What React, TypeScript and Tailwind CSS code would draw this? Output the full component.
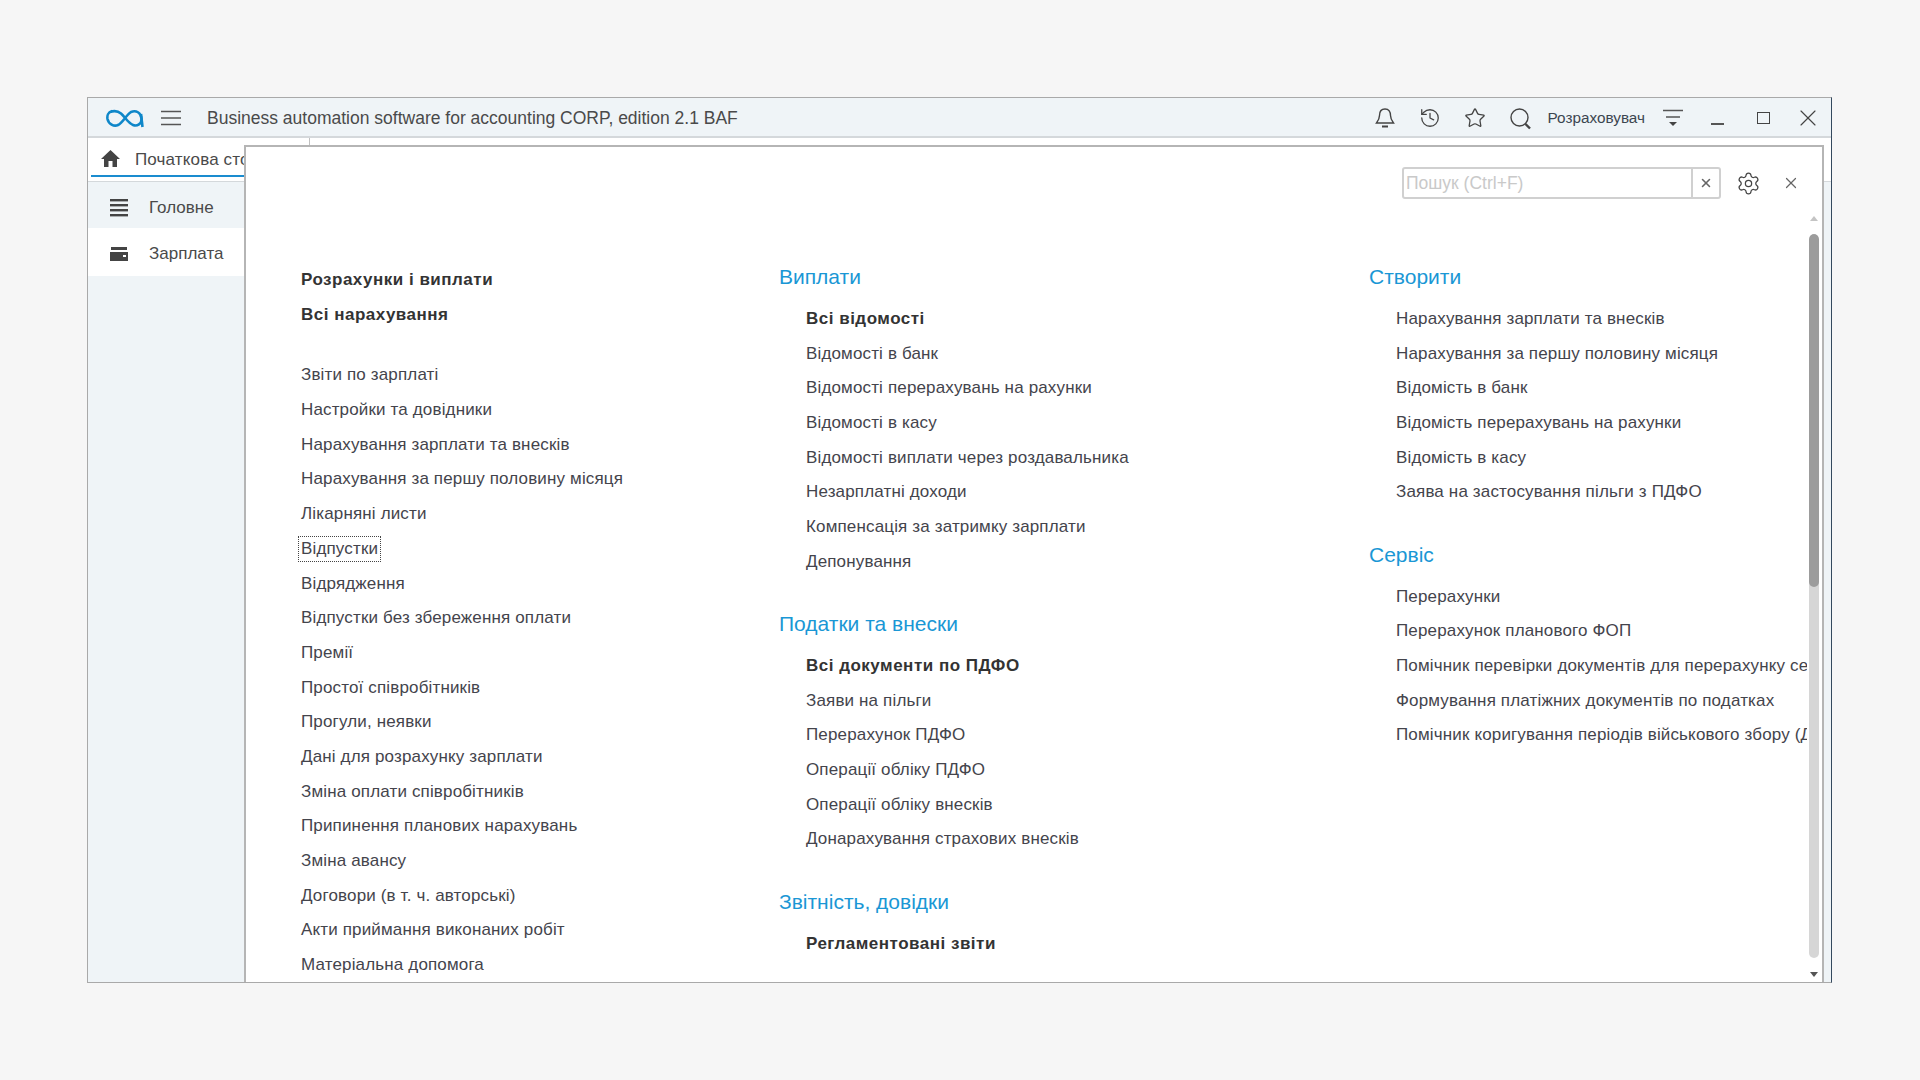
import { History, Star, Settings, X } from "lucide-react";

type Item = { label: string; bold?: boolean };

const leftTop = ["Розрахунки і виплати", "Всі нарахування"];
const leftItems = [
  "Звіти по зарплаті",
  "Настройки та довідники",
  "Нарахування зарплати та внесків",
  "Нарахування за першу половину місяця",
  "Лікарняні листи",
  "Відпустки",
  "Відрядження",
  "Відпустки без збереження оплати",
  "Премії",
  "Простої співробітників",
  "Прогули, неявки",
  "Дані для розрахунку зарплати",
  "Зміна оплати співробітників",
  "Припинення планових нарахувань",
  "Зміна авансу",
  "Договори (в т. ч. авторські)",
  "Акти приймання виконаних робіт",
  "Матеріальна допомога",
];

const groupsMiddle: { title: string; items: Item[] }[] = [
  {
    title: "Виплати",
    items: [
      { label: "Всі відомості", bold: true },
      { label: "Відомості в банк" },
      { label: "Відомості перерахувань на рахунки" },
      { label: "Відомості в касу" },
      { label: "Відомості виплати через роздавальника" },
      { label: "Незарплатні доходи" },
      { label: "Компенсація за затримку зарплати" },
      { label: "Депонування" },
    ],
  },
  {
    title: "Податки та внески",
    items: [
      { label: "Всі документи по ПДФО", bold: true },
      { label: "Заяви на пільги" },
      { label: "Перерахунок ПДФО" },
      { label: "Операції обліку ПДФО" },
      { label: "Операції обліку внесків" },
      { label: "Донарахування страхових внесків" },
    ],
  },
  {
    title: "Звітність, довідки",
    items: [{ label: "Регламентовані звіти", bold: true }],
  },
];

const groupsRight: { title: string; items: Item[] }[] = [
  {
    title: "Створити",
    items: [
      { label: "Нарахування зарплати та внесків" },
      { label: "Нарахування за першу половину місяця" },
      { label: "Відомість в банк" },
      { label: "Відомість перерахувань на рахунки" },
      { label: "Відомість в касу" },
      { label: "Заява на застосування пільги з ПДФО" },
    ],
  },
  {
    title: "Сервіс",
    items: [
      { label: "Перерахунки" },
      { label: "Перерахунок планового ФОП" },
      { label: "Помічник перевірки документів для перерахунку середнього заробітку" },
      { label: "Формування платіжних документів по податках" },
      { label: "Помічник коригування періодів військового збору (ДФ)" },
    ],
  },
];

function Row({ item }: { item: Item }) {
  return (
    <div
      className={`h-[34.7px] leading-[34.7px] whitespace-nowrap text-[17px] ${
        item.bold ? "font-bold text-[#333] tracking-[0.5px]" : "text-[#44444c] tracking-[0.15px]"
      }`}
    >
      {item.label}
    </div>
  );
}

function Group({ title, items }: { title: string; items: Item[] }) {
  return (
    <div className="mb-[27.5px]">
      <div className="h-[34px] leading-[34px] text-[21px] text-[#1a97d5] mb-[8px] whitespace-nowrap">{title}</div>
      <div className="pl-[27px]">
        {items.map((item) => (
          <Row key={item.label} item={item} />
        ))}
      </div>
    </div>
  );
}

export default function App() {
  return (
    <div className="w-[1920px] h-[1080px] bg-[#f6f6f6] overflow-hidden pt-[97px] pl-[87px] font-['Liberation_Sans',Arial,sans-serif]">
      <div className="relative w-[1745px] h-[886px] border border-[#a9a9a9] border-r-[#34495e] bg-[#eff4f7] flex flex-col">
        {/* title bar */}
        <div className="h-[40px] shrink-0 flex items-center border-b-2 border-[#d4d8db] pt-[2px] pl-[18px] pr-[9px] text-[#444]">
          <svg width="38" height="19" viewBox="0 0 38 19" fill="none" stroke="#0f87c9" strokeWidth="2.6">
            <path d="M6 2 C2 3 1 7 1.5 10 C2.5 15 8 18 12 16 C17 13.5 20 6 25 3 C30 1 35 3.5 35.5 9.5 C36 15 31 17.5 27 16 C22 14 19 8 15 4.5 C12 2 8 1.5 4 3" />
            <path d="M35 5 L36.5 18" />
          </svg>
          <svg width="20" height="16" viewBox="0 0 20 16" className="ml-[17px]" fill="none" stroke="#555" strokeWidth="1.5">
            <path d="M0 1.5H20M0 8H20M0 14.5H20" />
          </svg>
          <span className="ml-[26px] text-[17.5px] text-[#4a4a4a] whitespace-nowrap">
            Business automation software for accounting CORP, edition 2.1 BAF
          </span>
          <div className="ml-auto flex items-center text-[#444]">
            <svg width="22" height="22" viewBox="0 0 22 22" fill="none" stroke="#444" strokeWidth="1.4">
              <path d="M11 2 C7 2 5.5 5 5.5 8.5 C5.5 12 4 14 2.5 16 H19.5 C18 14 16.5 12 16.5 8.5 C16.5 5 15 2 11 2 Z" />
              <path d="M8 19.5 H14" strokeWidth="2" />
            </svg>
            <History size={22} strokeWidth={1.4} className="ml-[23px]" />
            <Star size={22} strokeWidth={1.4} className="ml-[23px]" />
            <svg width="23" height="23" viewBox="0 0 23 23" className="ml-[23px]" fill="none" stroke="#444" strokeWidth="1.4">
              <circle cx="10.5" cy="10.5" r="8.5" />
              <path d="M16.5 17 L21 21.5" strokeWidth="2.4" />
            </svg>
            <span className="ml-[16px] text-[15.3px] text-[#3c4650] whitespace-nowrap">Розраховувач</span>
            <svg width="22" height="20" viewBox="0 0 22 20" className="ml-[17px]" fill="none" stroke="#555" strokeWidth="1.4">
              <path d="M1 2.5H21M4 9H18" />
              <path d="M7 14H15L11 18Z" fill="#444" stroke="none" />
            </svg>
            <div className="ml-[27px] mt-[12px] w-[13px] h-[2px] bg-[#555]" />
            <div className="ml-[33px] w-[13px] h-[12px] border-[1.5px] border-[#444]" />
            <X size={28} strokeWidth={1} className="ml-[24px]" />
          </div>
        </div>

        {/* tabs */}
        <div className="h-[44px] shrink-0 bg-white flex items-start pl-[3px] border-b border-[#d4d8db]">
          <div className="w-[219px] h-[39px] border-r border-[#c0c0c0] flex items-center border-b-2 border-b-[#1a8ccf] pl-[10px] pt-[4px] overflow-hidden">
            <svg width="19" height="17" viewBox="0 0 19 17" fill="#444">
              <path d="M9.5 0 L19 9 H16 V17 H11.5 V11 H7.5 V17 H3 V9 H0 Z" />
            </svg>
            <span className="ml-[15px] mt-[3px] text-[17px] text-[#4a4a4a] tracking-[0.15px] whitespace-nowrap">Початкова сторінка</span>
          </div>
        </div>

        {/* left sidebar */}
        <div className="w-[157px] flex-1 flex flex-col">
          <div className="h-[46px] flex items-center pl-[22px] pt-[6px] bg-[#eff4f7]">
            <svg width="18" height="18" viewBox="0 0 18 18" fill="#444">
              <rect y="0" width="18" height="2.4" />
              <rect y="5" width="18" height="2.4" />
              <rect y="10" width="18" height="2.4" />
              <rect y="15" width="18" height="2.4" />
            </svg>
            <span className="ml-[21px] text-[17px] text-[#4a4a4a]">Головне</span>
          </div>
          <div className="h-[48px] flex items-center pl-[22px] pt-[4px] bg-white">
            <svg width="18" height="14" viewBox="0 0 18 14" fill="#444">
              <path d="M1 0H17V3H1Z" />
              <path d="M0 5H18V14H0ZM13 8V10H16V8Z" fillRule="evenodd" />
            </svg>
            <span className="ml-[21px] text-[17px] text-[#4a4a4a]">Зарплата</span>
          </div>
        </div>

        {/* section panel over the page */}
        <div className="absolute left-[156px] top-[47px] w-[1580px] bottom-0 bg-white border-l-2 border-t-2 border-r-2 border-[#b5b5b5] flex flex-col">
          <div className="h-[78px] shrink-0 pt-[20px] pr-[22px]">
            <div className="h-[32px] flex items-center justify-end">
              <div className="w-[319px] h-[32px] border-2 border-[#d0d0d0] rounded-[3px] flex">
                <span className="flex-1 pl-[2px] leading-[28px] text-[17.5px] text-[#c9c9c9]">Пошук (Ctrl+F)</span>
                <div className="w-[28px] border-l-2 border-[#d0d0d0] flex items-center justify-center">
                  <X size={14} strokeWidth={2.6} className="text-[#666]" />
                </div>
              </div>
              <Settings size={25} strokeWidth={1.2} className="ml-[15px] text-[#444]" />
              <X size={18} strokeWidth={1.6} className="ml-[21px] text-[#666]" />
            </div>
          </div>

          <div className="flex-1 min-h-0 flex">
            <div className="flex-1 min-w-0 flex overflow-hidden pt-[38px] pl-[55px]">
              <div className="w-[478px] shrink-0">
                {leftTop.map((label) => (
                  <Row key={label} item={{ label, bold: true }} />
                ))}
                <div className="h-[26px]" />
                {leftItems.map((label) =>
                  label === "Відпустки" ? (
                    <div key={label} className="h-[34.7px] flex items-center">
                      <span className="text-[17px] tracking-[0.15px] leading-[24px] h-[26px] px-[2px] -ml-[3px] text-[#44444c] border border-dotted border-[#444] whitespace-nowrap">
                        {label}
                      </span>
                    </div>
                  ) : (
                    <Row key={label} item={{ label }} />
                  )
                )}
              </div>
              <div className="w-[590px] shrink-0 -mt-[3px]">
                {groupsMiddle.map((g) => (
                  <Group key={g.title} title={g.title} items={g.items} />
                ))}
              </div>
              <div className="flex-1 min-w-0 overflow-hidden -mt-[3px]">
                {groupsRight.map((g) => (
                  <Group key={g.title} title={g.title} items={g.items} />
                ))}
              </div>
            </div>

            {/* scrollbar */}
            <div className="w-[14px] shrink-0 mr-[1px] -mt-[9px] flex flex-col items-center">
              <div className="w-0 h-0 border-x-[4px] border-x-transparent border-b-[5px] border-b-[#c4c4c4]" />
              <div className="w-[10px] flex-1 mt-[13px] mb-[14px] bg-[#d6d6d6] rounded-full overflow-hidden">
                <div className="h-[353px] bg-[#9c9c9c] rounded-full" />
              </div>
              <div className="w-0 h-0 mb-[5px] border-x-[4px] border-x-transparent border-t-[5px] border-t-[#555]" />
            </div>
          </div>
        </div>
      </div>
    </div>
  );
}
